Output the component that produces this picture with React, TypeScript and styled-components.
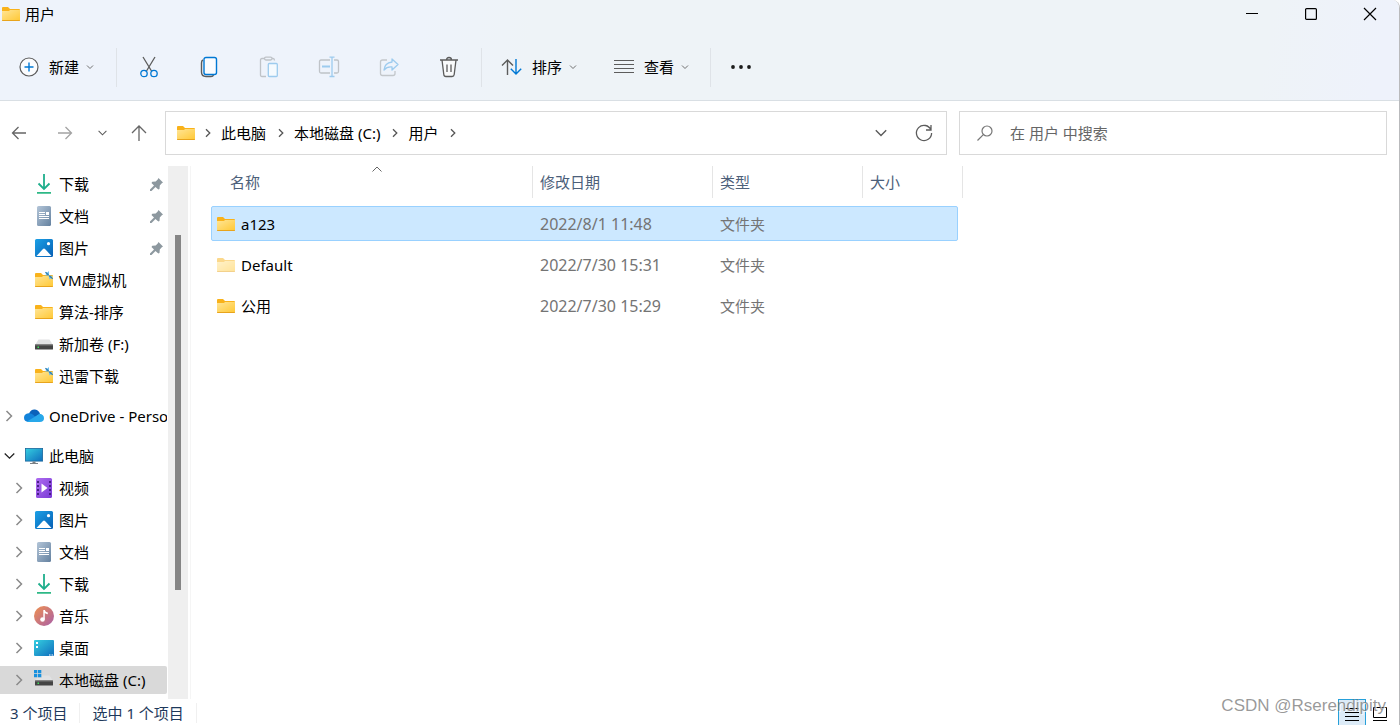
import React from "react";
import styled, { createGlobalStyle } from "styled-components";

const GlobalStyle = createGlobalStyle`
  *, *::before, *::after { box-sizing: border-box; }
  html, body { margin: 0; padding: 0; height: 100%; background: #fff; }
  body, button, input, table {
    font-family: "Noto Sans", "Noto Sans CJK SC", sans-serif;
    font-size: 15px;
    font-weight: 400;
    line-height: 20px;
    color: #000;
  }
  button { border: 0; padding: 0; background: none; cursor: default; }
  svg { display: block; flex: none; overflow: visible; }
`;

const Window = styled.div`
  height: 100vh;
  min-height: 480px;
  display: flex;
  flex-direction: column;
  position: relative;
  overflow: hidden;
  background: #fff;
  border-right: 1px solid #b9babc;
  border-top-right-radius: 8px;
`;

const Header = styled.header`
  flex: none;
  background: linear-gradient(100deg, #eef3fb 0%, #eef3fb 30%, #eef3f7 38%, #eef3f7 90%, #eef2fb 98%);
  border-bottom: 1px solid #d9dfe4;
`;

const TitleBar = styled.div`
  height: 28px;
  margin-bottom: 6px;
  padding: 0 0 0 2px;
  display: flex;
  align-items: center;
  gap: 5px;
`;

const Title = styled.h1`
  margin: 0;
  font-size: 15px;
  font-weight: 400;
  flex: 1;
`;

const WindowButton = styled.button`
  width: 59px;
  height: 28px;
  display: flex;
  align-items: center;
  justify-content: center;
`;

const WindowButtons = styled.div`
  display: flex;
`;

const Toolbar = styled.div`
  height: 66px;
  display: flex;
  align-items: center;
`;

const IconButton = styled.button`
  width: 60px;
  height: 40px;
  display: flex;
  align-items: center;
  justify-content: center;
`;

const MenuButton = styled.button<{ $width: number }>`
  width: ${(p) => p.$width}px;
  height: 40px;
  padding-left: 19px;
  display: flex;
  align-items: center;

  span { margin: 0 7px 0 10px; }
`;

const Divider = styled.span<{ $before?: number; $after?: number }>`
  width: 1px;
  height: 39px;
  margin-left: ${(p) => p.$before ?? 0}px;
  margin-right: ${(p) => p.$after ?? 0}px;
  background: #dfe3e8;
`;

const NavBar = styled.div`
  flex: none;
  display: flex;
  padding: 10px 12px 11px 0;
`;

const NavButton = styled.button<{ $width: number }>`
  width: ${(p) => p.$width}px;
  height: 44px;
  flex: none;
  display: flex;
  align-items: center;
  justify-content: center;
`;

const AddressBox = styled.nav`
  flex: 1;
  min-width: 0;
  height: 44px;
  border: 1px solid #d9d9d9;
  padding-left: 11px;
  display: flex;
  align-items: center;
`;

const Crumbs = styled.ol`
  flex: 1;
  margin: 0;
  padding: 0;
  list-style: none;
  display: flex;
  white-space: nowrap;

  li { display: flex; align-items: center; }
  svg { margin: 0 10px 0 12px; }
  li:first-child svg { margin-left: 10px; }
`;

const CrumbLink = styled.a`
  color: #000;
  text-decoration: none;
`;

const SearchBox = styled.label`
  width: 428px;
  height: 44px;
  margin-left: 12px;
  border: 1px solid #d9d9d9;
  padding-left: 17px;
  display: flex;
  align-items: center;
  gap: 17px;
`;

const SearchInput = styled.input`
  flex: 1;
  min-width: 0;
  height: 40px;
  padding: 0;
  border: 0;
  outline: 0;
  background: transparent;

  &::placeholder { color: #666; opacity: 1; }
`;

const Body = styled.div`
  flex: 1;
  min-height: 0;
  display: flex;
`;

const Sidebar = styled.aside`
  width: 168px;
  flex: none;
  overflow: hidden;
  padding: 4px 1px 4px 0;
`;

const Group = styled.ul`
  margin: 0 0 12px;
  padding: 0;
  list-style: none;
  display: flex;
  flex-direction: column;
  gap: 4px;
`;

const TreeItem = styled.button<{ $nested?: boolean; $selected?: boolean }>`
  width: 100%;
  height: 28px;
  padding: 0 4px 0 ${(p) => (p.$nested ? 10 : 0)}px;
  display: flex;
  align-items: center;
  overflow: hidden;
  white-space: nowrap;
  text-align: left;
  border-radius: 0 2px 2px 0;
  background: ${(p) => (p.$selected ? "#d9d9d9" : "transparent")};
`;

const ChevronSlot = styled.span`
  width: 18px;
  flex: none;
  margin-right: 6px;
  display: flex;
  justify-content: center;
`;

const IconSlot = styled.span`
  width: 20px;
  flex: none;
  margin-right: 5px;
  display: flex;
  justify-content: center;
`;

const TreeLabel = styled.span`
  flex: 1;
`;

const Scrollbar = styled.div`
  width: 20px;
  flex: none;
  padding-top: 69px;
  background: #efefef;
`;

const Thumb = styled.div`
  width: 6px;
  height: 355px;
  margin-left: 7px;
  background: #858585;
`;

const Content = styled.main`
  flex: 1;
  min-width: 0;
  margin-left: 2px;
  padding-left: 20px;
  border-left: 1px solid #f5f5f5;
`;

const FileTable = styled.table`
  display: block;
  width: 752px;

  thead, tbody { display: block; }
`;

const HeadRow = styled.tr`
  display: grid;
  grid-template-columns: 312px 180px 150px 100px;
  padding-left: 10px;
  margin-bottom: 8px;
`;

const HeadCell = styled.th<{ $first?: boolean }>`
  position: relative;
  height: 32px;
  padding: 6px 0 6px ${(p) => (p.$first ? 9 : 7)}px;
  border-right: 1px solid #e5e5e5;
  color: #4c607a;
  font-weight: 400;
  text-align: left;
`;

const SortMark = styled.span`
  position: absolute;
  top: 0;
  left: 0;
  right: 0;
  display: flex;
  justify-content: center;
`;

const Row = styled.tr<{ $selected?: boolean }>`
  display: grid;
  grid-template-columns: 321px 180px 150px 1fr;
  align-items: center;
  height: 35px;
  margin: 0 5px 6px 0;
  border: 1px solid ${(p) => (p.$selected ? "#99d1ff" : "transparent")};
  border-radius: 2px;
  background: ${(p) => (p.$selected ? "#cce8ff" : "transparent")};
`;

const NameCell = styled.td`
  padding: 0 0 0 5px;
  display: flex;
  align-items: center;
  gap: 6px;
  line-height: 20px;
`;

const InfoCell = styled.td<{ $date?: boolean }>`
  padding: 0 0 0 7px;
  color: #747474;
  font-size: ${(p) => (p.$date ? 16 : 15)}px;
`;

const StatusBar = styled.footer`
  flex: none;
  height: 26px;
  padding-left: 10px;
  display: flex;
  align-items: center;
  color: #1e395b;
`;

const StatusText = styled.span`
  margin-top: 2px;
  padding-right: 12px;
  margin-right: 12px;
  border-right: 1px solid #f0f0f0;
`;

const ViewButtons = styled.div`
  height: 26px;
  margin: 0 5px 0 auto;
  display: flex;
`;

const ViewButton = styled.button<{ $active?: boolean }>`
  width: 28px;
  height: 26px;
  padding-top: 3px;
  display: flex;
  align-items: center;
  justify-content: center;
  border: 1px solid ${(p) => (p.$active ? "#26a0da" : "transparent")};
  border-bottom: 0;
  background: ${(p) => (p.$active ? "#dcebf7" : "transparent")};
`;

const Watermark = styled.span`
  position: absolute;
  right: 13px;
  bottom: 9px;
  font-family: "Liberation Sans", sans-serif;
  font-size: 17px;
  color: rgba(120, 120, 120, 0.75);
  text-shadow: 1px 1px 0 rgba(255, 255, 255, 0.8);
  pointer-events: none;
`;

const gray = "#5c5c5c";
const blue = "#0078d4";

const FolderIcon = ({ faded, linked }: { faded?: boolean; linked?: boolean }) => (
  <svg width="18" height="16" viewBox="0 0 18 16" opacity={faded ? 0.5 : 1}>
    <defs>
      <linearGradient id="folder" x1="0" y1="0" x2="1" y2="1">
        <stop offset="0" stopColor="#ffe596" />
        <stop offset="1" stopColor="#ffc938" />
      </linearGradient>
    </defs>
    <path d="M0 2Q0 1 1 1H6L8 3H17Q18 3 18 4V8H0Z" fill="#f9b21a" />
    <path d="M0 5H7L8 4H18V14H0Z" fill="url(#folder)" />
    <path d="M0 14h18v.6q0 .4-.5.4H.5Q0 15 0 14.6Z" fill="#e8a41c" />
    {linked && (
      <>
        <path d="M10 0l2 .8L14-1v4.500H9.800L11.500 2zM18 7l-1.800-1L14.500 7.500 13.500 3.500l4.300.5-1.300 1z" fill="#6dbcf0" />
        <path d="M10.500.2l3 2.800M14.300 3.800l3.400 3" stroke="#2f7fae" strokeWidth="1.200" />
      </>
    )}
  </svg>
);

const PlusIcon = () => (
  <svg width="20" height="20" viewBox="0 0 20 20" fill="none">
    <circle cx="10" cy="10" r="9" fill="#fbfcfe" stroke={gray} strokeWidth="1.200" />
    <path d="M10 5.500v9M5.500 10h9" stroke={blue} strokeWidth="1.400" />
  </svg>
);

const SmallChevron = () => (
  <svg width="8" height="5" viewBox="0 0 8 5" fill="none" stroke="#707070">
    <path d="M1 .5l3 3 3-3" />
  </svg>
);

const CutIcon = () => (
  <svg width="20" height="22" viewBox="0 0 20 22" fill="none" strokeWidth="1.300">
    <path d="M4 1l8.500 14M16 1L7.500 15" stroke={gray} />
    <circle cx="5" cy="17.500" r="3.200" stroke={blue} />
    <circle cx="15" cy="17.500" r="3.200" stroke={blue} />
  </svg>
);

const CopyIcon = () => (
  <svg width="20" height="22" viewBox="0 0 20 22" fill="none" strokeWidth="1.400">
    <path d="M4 4Q2.500 4.500 2.500 7v9q0 4.500 4.500 4.500h5q2 0 2.500-1.500" stroke={gray} />
    <rect x="5" y="1.500" width="12.500" height="17" rx="2" fill="#fafcff" stroke={blue} />
  </svg>
);

const PasteIcon = () => (
  <svg width="20" height="22" viewBox="0 0 20 22" fill="none" strokeWidth="1.300">
    <path d="M7 20.500H3q-1.500 0-1.500-1.500V4Q1.500 2.500 3 2.500h2.500M13 2.500h1q1.500 0 1.500 2" stroke="#bfc3c8" />
    <rect x="5.500" y="1.200" width="7.500" height="2.800" rx="1.400" stroke="#bfc3c8" />
    <rect x="9.300" y="7.500" width="9" height="13" rx="1" fill="#f5fafe" stroke="#9dcbee" />
  </svg>
);

const RenameIcon = () => (
  <svg width="22" height="22" viewBox="0 0 22 22" fill="none" strokeWidth="1.300">
    <path d="M12 4H3Q1.500 4 1.500 5.500v10Q1.500 17 3 17h9M16 4h3q1.500 0 1.500 1.500v10q0 1.500-1.500 1.500h-3" stroke="#bfc3c8" />
    <path d="M11.500 1.200h5M11.500 20.500h5M14 1.200v19.300" stroke="#9dcbee" />
    <path d="M4 10.500h8" stroke="#9dcbee" strokeWidth="2" />
  </svg>
);

const ShareIcon = () => (
  <svg width="20" height="20" viewBox="0 0 20 20" fill="none" strokeWidth="1.300" strokeLinejoin="round">
    <path d="M8 3H3.500Q1.500 3 1.500 5v11.500q0 2 2 2H14q2 0 2-2V14" stroke="#c3c7cb" />
    <path d="M13 2l6 5.500-6 5.500V10Q8 9.500 5 13q.5-7 8-8z" stroke="#9dcbee" />
  </svg>
);

const DeleteIcon = () => (
  <svg width="20" height="22" viewBox="0 0 20 22" fill="none" stroke={gray} strokeWidth="1.300">
    <path d="M3 4l1.800 14.500Q5 20.500 7 20.500h6q2 0 2.200-2L17 4" fill="#f9fafb" />
    <path d="M1 4h18M7.500 4q0-2.500 2.500-2.500T12.500 4M8 8.500v7.500M12 8.500v7.500" />
  </svg>
);

const SortIcon = () => (
  <svg width="21" height="18" viewBox="0 0 21 18" fill="none" strokeWidth="1.400">
    <path d="M6.500 17V2M1 7.500L6.500 2 12 7.500" stroke={gray} />
    <path d="M15 1v15M9.800 10.800L15 16l5.200-5.200" stroke={blue} />
  </svg>
);

const ViewIcon = () => (
  <svg width="20" height="14" viewBox="0 0 20 14" stroke={gray}>
    <path d="M0 .5h20M0 4.500h20M0 8.500h20M0 12.500h20" />
  </svg>
);

const MoreIcon = () => (
  <svg width="20" height="4" viewBox="0 0 20 4" fill="#1b1b1b">
    <circle cx="2" cy="2" r="1.900" />
    <circle cx="10" cy="2" r="1.900" />
    <circle cx="18" cy="2" r="1.900" />
  </svg>
);

const Arrow = ({ dir }: { dir: "left" | "right" | "up" }) => (
  <svg width="16" height="16" viewBox="0 0 16 16" fill="none" stroke={dir === "right" ? "#a3a3a3" : "#666"} strokeWidth="1.300">
    {dir === "left" && <path d="M15 8H1.500M7.500 2l-6 6 6 6" />}
    {dir === "right" && <path d="M1 8h13.500M8.500 2l6 6-6 6" />}
    {dir === "up" && <path d="M8 16V1M1 8l7-7 7 7" />}
  </svg>
);

const ChevronDown = ({ size = 12, color = "#5a5a5a" }: { size?: number; color?: string }) => (
  <svg width={size} height="8" viewBox="0 0 12 8" fill="none" stroke={color} strokeWidth="1.400">
    <path d="M.8 1.200L6 6.400l5.200-5.200" />
  </svg>
);

const CrumbChevron = () => (
  <svg width="6" height="10" viewBox="0 0 6 10" fill="none" stroke="#555" strokeWidth="1.300">
    <path d="M1 1.200L4.800 5 1 8.800" />
  </svg>
);

const ChevronRight = () => (
  <svg width="6" height="12" viewBox="0 0 6 12" fill="none" stroke="#8a8a8a" strokeWidth="1.500">
    <path d="M.5 1l5 5-5 5" />
  </svg>
);

const RefreshIcon = () => (
  <svg width="18" height="18" viewBox="0 0 18 18" fill="none" stroke={gray} strokeWidth="1.300">
    <path d="M16 6A7.600 7.600 0 1 0 16.600 9M16 1v5h-5" />
  </svg>
);

const SearchIcon = () => (
  <svg width="16" height="16" viewBox="0 0 16 16" fill="none" stroke="#777" strokeWidth="1.200">
    <circle cx="10" cy="6" r="5" />
    <path d="M6.300 9.700L.5 15.500" />
  </svg>
);

const PinIcon = () => (
  <svg width="13" height="13" viewBox="0 0 13 13" fill="#8d989f">
    <path d="M8.500 0L13 4.500l-1.200.8-2 2.200-.3 3.500-1.200.5L5.500 9 1.500 13H0v-1.500L4 7.500 1.500 5l.8-1.200 3.400-.3 2-2z" />
  </svg>
);

const DownloadIcon = () => (
  <svg width="14" height="20" viewBox="0 0 14 20" fill="none" stroke="#1eae8c" strokeWidth="1.800">
    <path d="M7 0v14.500M1.500 9.500L7 15l5.500-5.500" />
    <path d="M0 18.800h14" stroke="#2db886" />
  </svg>
);

const DocumentIcon = () => (
  <svg width="14" height="20" viewBox="0 0 14 20">
    <defs>
      <linearGradient id="doc" x1="0" y1="0" x2="1" y2="1">
        <stop offset="0" stopColor="#b3c5d8" />
        <stop offset="1" stopColor="#64819f" />
      </linearGradient>
    </defs>
    <rect width="14" height="20" rx="1.500" fill="url(#doc)" />
    <path d="M2 6.500h6M2 8.500h6M2 10.500h10M2 12.500h10" stroke="#fff" />
    <rect x="9" y="6" width="3" height="3" fill="#fff" />
  </svg>
);

const PictureIcon = () => (
  <svg width="18" height="18" viewBox="0 0 18 18">
    <defs>
      <linearGradient id="pic" x1="0" y1="0" x2="1" y2="1">
        <stop offset="0" stopColor="#1ba0e6" />
        <stop offset="1" stopColor="#0760b5" />
      </linearGradient>
    </defs>
    <rect width="18" height="18" rx="1.500" fill="url(#pic)" />
    <path d="M1.500 17L8 10q1-1 2 0l6.500 7z" fill="#fff" />
    <circle cx="13.500" cy="4.700" r="1.600" fill="#fff" />
  </svg>
);

const DriveIcon = ({ system }: { system?: boolean }) => (
  <svg width="20" height="18" viewBox="0 0 20 18">
    <path d="M4.500 4.500h11L19 10H1z" fill="#e1e2e3" />
    <rect x="1" y="9.500" width="18" height="5" rx=".5" fill="#444" />
    <rect x="1" y="9.500" width="18" height="1" fill="#777" />
    <rect x="3.500" y="11.500" width="1.500" height="1.500" fill="#3fe05c" />
    {system && (
      <>
        <rect y="-1" width="8" height="8" fill="#d9d9d9" />
        <path d="M0-1h3.300v3.300H0zM4-1h3.300v3.300H4zM0 3h3.300v3.300H0zM4 3h3.300v3.300H4z" fill="#1790de" />
      </>
    )}
  </svg>
);

const CloudIcon = () => (
  <svg width="20" height="14" viewBox="0 0 20 14">
    <path d="M5 4.500Q7 0 11 .5q4 .5 5 4.500L10 9z" fill="#0a62ba" />
    <path d="M4.500 13Q0 12.500 0 8.800 0 5 4.500 4.300q3-.3 5 1.700l3 3L5 13z" fill="#1283da" />
    <path d="M3 12.500L12 7l3.500-2.200Q20 5.500 20 9.200q0 3.800-4.300 3.800H5q-1.200 0-2-.5z" fill="#28a8ea" />
  </svg>
);

const PcIcon = () => (
  <svg width="18" height="16" viewBox="0 0 18 16">
    <defs>
      <linearGradient id="pc" x1="0" y1="0" x2="1" y2="1">
        <stop offset="0" stopColor="#35cfe0" />
        <stop offset="1" stopColor="#0f6dbd" />
      </linearGradient>
    </defs>
    <rect x=".4" y=".4" width="17.200" height="12.700" fill="url(#pc)" stroke="#1b679b" strokeWidth=".8" />
    <path d="M7.500 13.500h3V15H13v1H5v-1h2.500z" fill="#7b8085" />
  </svg>
);

const VideoIcon = () => (
  <svg width="16" height="20" viewBox="0 0 16 20">
    <defs>
      <linearGradient id="vid" x1="0" y1="0" x2="1" y2="1">
        <stop offset="0" stopColor="#ae6cf0" />
        <stop offset="1" stopColor="#7a3ad6" />
      </linearGradient>
    </defs>
    <rect width="16" height="20" rx="1.500" fill="url(#vid)" />
    <path d="M2 3v15M14 3v15" stroke="#41197c" strokeWidth="1.800" strokeDasharray="2 2" />
    <path d="M5.500 5.500v9l6-4.500z" fill="#fff" />
  </svg>
);

const MusicIcon = () => (
  <svg width="20" height="20" viewBox="0 0 20 20">
    <defs>
      <linearGradient id="mus" x1="0" y1="0" x2="1" y2="1">
        <stop offset="0" stopColor="#f0914f" />
        <stop offset="1" stopColor="#a85fa8" />
      </linearGradient>
    </defs>
    <circle cx="10" cy="10" r="10" fill="url(#mus)" />
    <circle cx="8.500" cy="13.500" r="2.300" fill="#fff" />
    <path d="M9.300 4h1.500q.5 2.200 3 2.500v1.800q-2-.2-3-1.200v6.400H9.300z" fill="#fff" />
  </svg>
);

const DesktopIcon = () => (
  <svg width="20" height="16" viewBox="0 0 20 16">
    <rect width="20" height="16" rx="1" fill="url(#pc)" />
    <path d="M2 2h2v2H2zM2 6h2v2H2z" fill="#fff" />
    <path d="M15 15h1.500M17.500 15H19" stroke="#fff" />
  </svg>
);

type Icon = () => React.JSX.Element;
const LinkedFolder: Icon = () => <FolderIcon linked />;
const SystemDrive: Icon = () => <DriveIcon system />;

const quickAccess: { label: string; icon: Icon; pinned?: boolean }[] = [
  { label: "下载", icon: DownloadIcon, pinned: true },
  { label: "文档", icon: DocumentIcon, pinned: true },
  { label: "图片", icon: PictureIcon, pinned: true },
  { label: "VM虚拟机", icon: LinkedFolder },
  { label: "算法-排序", icon: () => <FolderIcon /> },
  { label: "新加卷 (F:)", icon: () => <DriveIcon /> },
  { label: "迅雷下载", icon: LinkedFolder },
];

const thisPc: { label: string; icon: Icon; selected?: boolean }[] = [
  { label: "视频", icon: VideoIcon },
  { label: "图片", icon: PictureIcon },
  { label: "文档", icon: DocumentIcon },
  { label: "下载", icon: DownloadIcon },
  { label: "音乐", icon: MusicIcon },
  { label: "桌面", icon: DesktopIcon },
  { label: "本地磁盘 (C:)", icon: SystemDrive, selected: true },
];

const files = [
  { name: "a123", date: "2022/8/1 11:48", selected: true },
  { name: "Default", date: "2022/7/30 15:31", faded: true },
  { name: "公用", date: "2022/7/30 15:29" },
];

export default function App() {
  return (
    <Window>
      <GlobalStyle />
      <Header>
        <TitleBar>
          <FolderIcon />
          <Title>用户</Title>
          <WindowButtons>
            <WindowButton aria-label="最小化">
              <svg width="12" height="12" viewBox="0 0 12 12" stroke="#000"><path d="M0 5.500h12" /></svg>
            </WindowButton>
            <WindowButton aria-label="最大化">
              <svg width="12" height="12" viewBox="0 0 12 12" stroke="#000" fill="none"><rect x=".6" y=".6" width="10.800" height="10.800" rx="1" strokeWidth="1.200" /></svg>
            </WindowButton>
            <WindowButton aria-label="关闭">
              <svg width="12" height="12" viewBox="0 0 12 12" stroke="#000" strokeWidth="1.200"><path d="M0 0l12 12M12 0L0 12" /></svg>
            </WindowButton>
          </WindowButtons>
        </TitleBar>
        <Toolbar>
          <MenuButton $width={116}><PlusIcon /><span>新建</span><SmallChevron /></MenuButton>
          <Divider $after={2} />
          <IconButton aria-label="剪切"><CutIcon /></IconButton>
          <IconButton aria-label="复制"><CopyIcon /></IconButton>
          <IconButton aria-label="粘贴" disabled><PasteIcon /></IconButton>
          <IconButton aria-label="重命名" disabled><RenameIcon /></IconButton>
          <IconButton aria-label="共享" disabled><ShareIcon /></IconButton>
          <IconButton aria-label="删除"><DeleteIcon /></IconButton>
          <Divider $before={2} />
          <MenuButton $width={113}><SortIcon /><span>排序</span><SmallChevron /></MenuButton>
          <MenuButton $width={115}><ViewIcon /><span>查看</span><SmallChevron /></MenuButton>
          <Divider />
          <IconButton aria-label="查看更多"><MoreIcon /></IconButton>
        </Toolbar>
      </Header>

      <NavBar>
        <NavButton $width={38} aria-label="后退"><Arrow dir="left" /></NavButton>
        <NavButton $width={54} aria-label="前进"><Arrow dir="right" /></NavButton>
        <NavButton $width={20} aria-label="最近浏览的位置"><ChevronDown size={9} /></NavButton>
        <NavButton $width={53} aria-label="上移"><Arrow dir="up" /></NavButton>
        <AddressBox aria-label="地址">
          <FolderIcon />
          <Crumbs>
            <li><CrumbChevron /></li>
            <li><CrumbLink href="#pc">此电脑</CrumbLink><CrumbChevron /></li>
            <li><CrumbLink href="#c">本地磁盘 (C:)</CrumbLink><CrumbChevron /></li>
            <li><CrumbLink href="#users">用户</CrumbLink><CrumbChevron /></li>
          </Crumbs>
          <NavButton $width={42} aria-label="历史记录"><ChevronDown size={14} /></NavButton>
          <NavButton $width={44} aria-label="刷新"><RefreshIcon /></NavButton>
        </AddressBox>
        <SearchBox>
          <SearchIcon />
          <SearchInput type="search" aria-label="搜索" placeholder="在 用户 中搜索" />
        </SearchBox>
      </NavBar>

      <Body>
        <Sidebar>
          <Group>
            {quickAccess.map(({ label, icon: ItemIcon, pinned }) => (
              <li key={label}>
                <TreeItem $nested>
                  <ChevronSlot />
                  <IconSlot><ItemIcon /></IconSlot>
                  <TreeLabel>{label}</TreeLabel>
                  {pinned && <PinIcon />}
                </TreeItem>
              </li>
            ))}
          </Group>
          <Group>
            <li>
              <TreeItem>
                <ChevronSlot><ChevronRight /></ChevronSlot>
                <IconSlot><CloudIcon /></IconSlot>
                <TreeLabel>OneDrive - Personal</TreeLabel>
              </TreeItem>
            </li>
          </Group>
          <Group>
            <li>
              <TreeItem aria-expanded>
                <ChevronSlot><ChevronDown size={11} color="#222" /></ChevronSlot>
                <IconSlot><PcIcon /></IconSlot>
                <TreeLabel>此电脑</TreeLabel>
              </TreeItem>
            </li>
            {thisPc.map(({ label, icon: ItemIcon, selected }) => (
              <li key={label}>
                <TreeItem $nested $selected={selected}>
                  <ChevronSlot><ChevronRight /></ChevronSlot>
                  <IconSlot><ItemIcon /></IconSlot>
                  <TreeLabel>{label}</TreeLabel>
                </TreeItem>
              </li>
            ))}
          </Group>
        </Sidebar>
        <Scrollbar><Thumb /></Scrollbar>
        <Content>
          <FileTable>
            <thead>
              <HeadRow>
                <HeadCell $first>
                  名称
                  <SortMark>
                    <svg width="10" height="6" viewBox="0 0 10 6" fill="none" stroke="#666"><path d="M.5 5.500L5 1l4.500 4.500" /></svg>
                  </SortMark>
                </HeadCell>
                <HeadCell>修改日期</HeadCell>
                <HeadCell>类型</HeadCell>
                <HeadCell>大小</HeadCell>
              </HeadRow>
            </thead>
            <tbody>
              {files.map((file) => (
                <Row key={file.name} $selected={file.selected}>
                  <NameCell><FolderIcon faded={file.faded} />{file.name}</NameCell>
                  <InfoCell $date>{file.date}</InfoCell>
                  <InfoCell>文件夹</InfoCell>
                  <InfoCell />
                </Row>
              ))}
            </tbody>
          </FileTable>
        </Content>
      </Body>

      <StatusBar>
        <StatusText>3 个项目</StatusText>
        <StatusText>选中 1 个项目</StatusText>
        <ViewButtons>
          <ViewButton $active aria-label="详细信息">
            <svg width="14" height="14" viewBox="0 0 14 14" stroke="#000"><path d="M0 1.500h14M0 5.500h14M0 9.500h14M0 13.500h14" /></svg>
          </ViewButton>
          <ViewButton aria-label="大图标">
            <svg width="14" height="14" viewBox="0 0 14 14" stroke="#000" fill="none"><path d="M.5.5h13v10H.5zM0 13.500h14" /></svg>
          </ViewButton>
        </ViewButtons>
      </StatusBar>
      <Watermark>CSDN @Rserendipity</Watermark>
    </Window>
  );
}
